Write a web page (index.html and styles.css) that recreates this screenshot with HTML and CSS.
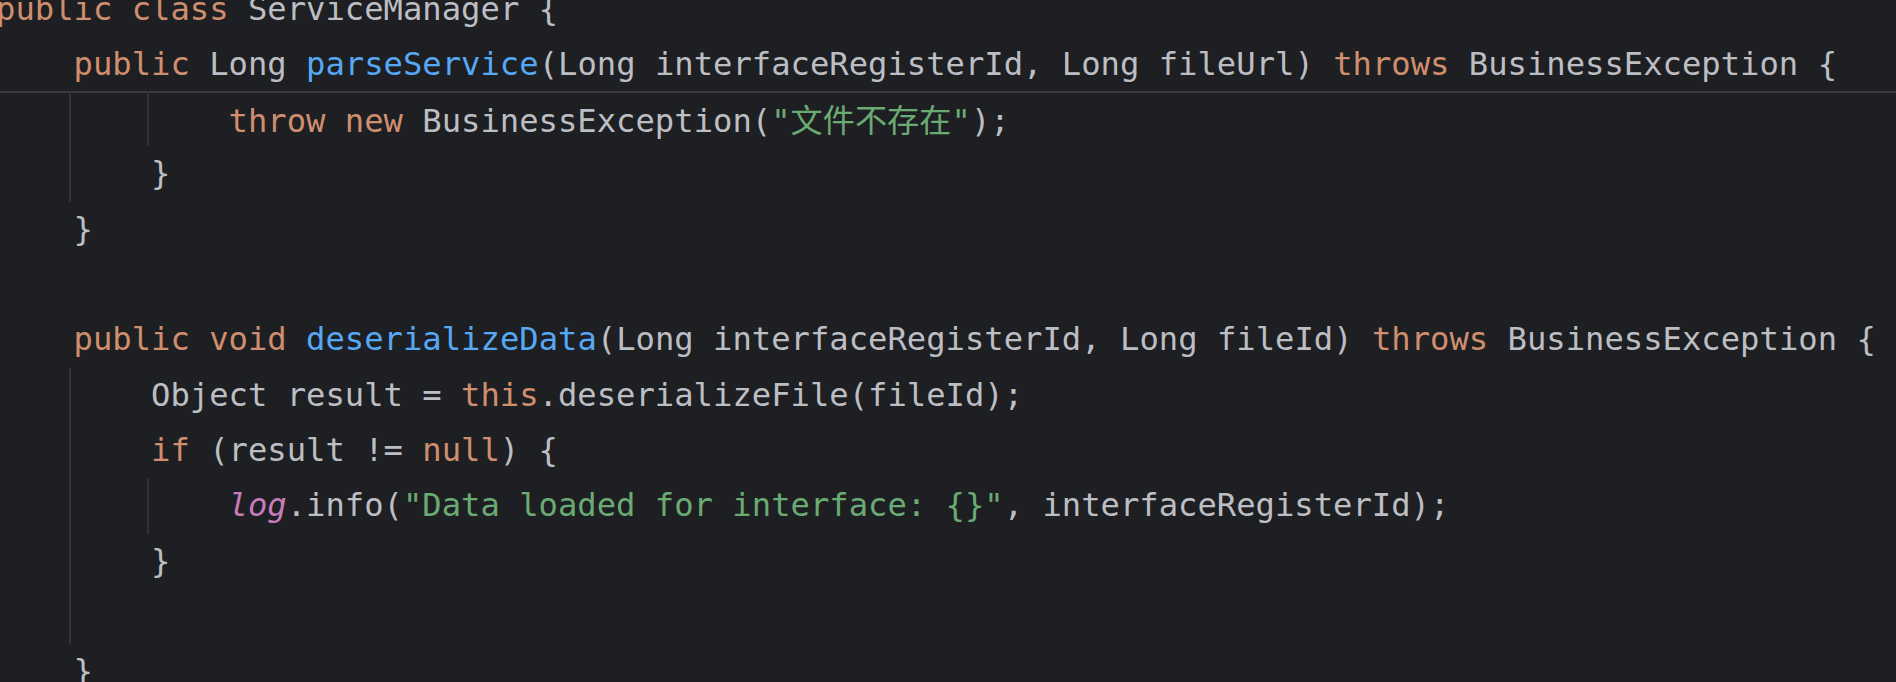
FILE: index.html
```html
<!DOCTYPE html>
<html lang="en">
<head>
<meta charset="utf-8">
<title>ServiceManager.java</title>
<link rel="stylesheet" href="styles.css">
</head>
<body>
<div class="editor">
  <div class="sticky">
    <div class="ln"><span class="kw">public</span> <span class="kw">class</span> ServiceManager {</div>
    <div class="ln">    <span class="kw">public</span> Long <span class="fn">parseService</span>(Long interfaceRegisterId, Long fileUrl) <span class="kw">throws</span> BusinessException {</div>
  </div>
  <div class="body">
    <div class="guide first">
      <div class="guide">
        <div class="ln">    <span class="kw">throw</span> <span class="kw">new</span> BusinessException(<span class="str">"<span class="cjk">文件不存在</span>"</span>);</div>
      </div>
      <div class="ln">    }</div>
    </div>
    <div class="ln">    }</div>
    <div class="ln"> </div>
    <div class="ln">    <span class="kw">public</span> <span class="kw">void</span> <span class="fn">deserializeData</span>(Long interfaceRegisterId, Long fileId) <span class="kw">throws</span> BusinessException {</div>
    <div class="guide">
      <div class="ln">    Object result = <span class="kw">this</span>.deserializeFile(fileId);</div>
      <div class="ln">    <span class="kw">if</span> (result != <span class="kw">null</span>) {</div>
      <div class="guide">
        <div class="ln">    <span class="field">log</span>.info(<span class="str">"Data loaded for interface: {}"</span>, interfaceRegisterId);</div>
      </div>
      <div class="ln">    }</div>
      <div class="ln"> </div>
    </div>
    <div class="ln">    }</div>
  </div>
</div>
</body>
</html>
```
FILE: styles.css
```css
html, body {
  margin: 0;
  padding: 0;
  background: #1e1f22;
  overflow: hidden;
  height: 100%;
}

.editor {
  margin-left: -4px;
  margin-top: -18px;
  font-family: "DejaVu Sans Mono", "Liberation Mono", "Noto Sans CJK SC", monospace;
  font-size: 32.2px;
  line-height: 55.33px;
  color: #bcbec4;
}

.ln {
  white-space: pre;
  height: 55.33px;
}

.sticky {
  border-bottom: 2px solid #393b40;
  height: 109px;
  overflow: hidden;
}

.body {
  margin-top: -2px;
}

.guide {
  margin-left: calc(4ch - 4.5px);
  border-left: 2px solid #313338;
  padding-left: 2.5px;
}

.guide.first {
  margin-top: 0;
}

.kw { color: #cf8e6d; }
.fn { color: #56a8f5; }
.str { color: #6aab73; }
.field { color: #c77dbb; font-style: italic; }
.cjk { font-family: "Noto Sans CJK SC", sans-serif; }
```
